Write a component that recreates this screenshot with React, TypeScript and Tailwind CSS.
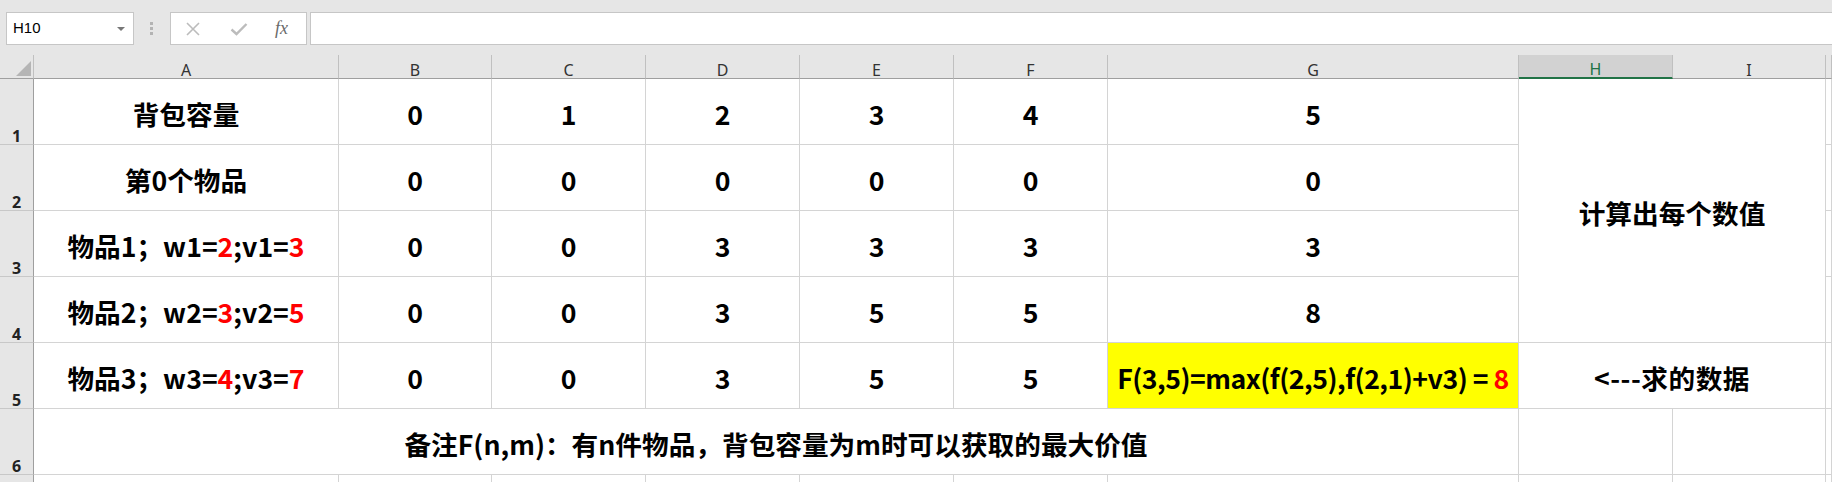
import type { ReactNode } from "react";

const colLetters = ["A", "B", "C", "D", "E", "F", "G", "H", "I", ""];

function Red({ children }: { children: ReactNode }) {
  return <span className="text-[#ff0000]">{children}</span>;
}

function Item({ n, w, v }: { n: number; w: number; v: number }) {
  return (
    <>
      物品{n}；w{n}=<Red>{w}</Red>;v{n}=<Red>{v}</Red>
    </>
  );
}

const cell =
  "flex items-center justify-center border-r border-b border-[#d4d4d4] pt-[5px] whitespace-nowrap";

function RowHead({ n }: { n?: number }) {
  return (
    <div className="flex items-end justify-center border-r border-b border-r-[#9f9f9f] border-b-[#c8c8c8] bg-[#e6e6e6] font-['Noto_Sans',sans-serif] text-[16px] leading-[16px] text-[#222]">
      {n}
    </div>
  );
}

function NumberCells({ values }: { values: string[] }) {
  return (
    <>
      {values.map((v, i) => (
        <div key={i} className={cell}>
          {v}
        </div>
      ))}
    </>
  );
}

export default function App() {
  return (
    <div className="h-[482px] w-[1832px] overflow-hidden bg-white">
      {/* formula bar */}
      <div className="flex h-[55px] items-start bg-[#e6e6e6] pt-[12px]">
        <div className="ml-[6px] flex h-[33px] w-[128px] items-center justify-between border border-[#c6c6c6] bg-white pl-[6px] pr-[8px] font-['Liberation_Sans',sans-serif] text-[15px] text-black">
          <span>H10</span>
          <svg width="8" height="4" viewBox="0 0 8 4">
            <polygon points="0,0 8,0 4,4" fill="#777" />
          </svg>
        </div>
        <div className="ml-[16px] flex h-[33px] flex-col items-center justify-center gap-[2px]">
          <div className="h-[3px] w-[3px] bg-[#b3b3b3]" />
          <div className="h-[3px] w-[3px] bg-[#b3b3b3]" />
          <div className="h-[3px] w-[3px] bg-[#b3b3b3]" />
        </div>
        <div className="ml-[17px] flex h-[33px] w-[137px] items-center border border-[#c6c6c6] bg-white pl-[14px]">
          <svg width="16" height="14" viewBox="0 0 16 14">
            <path d="M2 1 L14 13 M14 1 L2 13" stroke="#bcbcbc" strokeWidth="1.6" fill="none" />
          </svg>
          <svg className="ml-[29px]" width="18" height="14" viewBox="0 0 18 14">
            <path d="M1.5 7.5 L6.5 12 L16.5 2" stroke="#bcbcbc" strokeWidth="2.4" fill="none" />
          </svg>
          <span className="ml-[27px] font-['Liberation_Serif',serif] text-[18px] italic text-[#6a6a6a]">
            fx
          </span>
        </div>
        <div className="ml-[3px] h-[33px] flex-1 border border-r-0 border-[#c6c6c6] bg-white" />
      </div>

      {/* sheet */}
      <div className="grid grid-cols-[34px_305px_153px_154px_154px_154px_154px_411px_154px_153px_1fr] grid-rows-[24px_repeat(6,66px)_40px] font-['Noto_Sans_CJK_SC',sans-serif] text-[26.67px] font-bold text-black">
        {/* column headers */}
        <div className="flex items-end justify-end border-r border-b border-r-[#c0c0c0] border-b-[#9f9f9f] bg-[#e6e6e6] pb-[2px] pr-[2px]">
          <svg width="15" height="15" viewBox="0 0 15 15">
            <polygon points="15,0 15,15 0,15" fill="#b5b5b5" />
          </svg>
        </div>
        {colLetters.map((c, i) =>
          c === "H" ? (
            <div
              key={i}
              className="flex items-end justify-center border-r border-b-2 border-r-[#c0c0c0] border-b-[#217346] bg-[#d2d2d2] font-['Noto_Sans',sans-serif] text-[16px] font-normal leading-[16px] text-[#217346]"
            >
              {c}
            </div>
          ) : (
            <div
              key={i}
              className="flex items-end justify-center border-r border-b border-r-[#c0c0c0] border-b-[#9f9f9f] bg-[#e6e6e6] font-['Noto_Sans',sans-serif] text-[16px] font-normal leading-[16px] text-[#333]"
            >
              {c}
            </div>
          ),
        )}

        {/* row 1 */}
        <RowHead n={1} />
        <div className={cell}>背包容量</div>
        <NumberCells values={["0", "1", "2", "3", "4", "5"]} />
        <div className={`${cell} col-span-2 row-span-4`}>计算出每个数值</div>
        <div className={cell} />

        {/* row 2 */}
        <RowHead n={2} />
        <div className={cell}>第0个物品</div>
        <NumberCells values={["0", "0", "0", "0", "0", "0"]} />
        <div className={cell} />

        {/* row 3 */}
        <RowHead n={3} />
        <div className={cell}>
          <Item n={1} w={2} v={3} />
        </div>
        <NumberCells values={["0", "0", "3", "3", "3", "3"]} />
        <div className={cell} />

        {/* row 4 */}
        <RowHead n={4} />
        <div className={cell}>
          <Item n={2} w={3} v={5} />
        </div>
        <NumberCells values={["0", "0", "3", "5", "5", "8"]} />
        <div className={cell} />

        {/* row 5 */}
        <RowHead n={5} />
        <div className={cell}>
          <Item n={3} w={4} v={7} />
        </div>
        <NumberCells values={["0", "0", "3", "5", "5"]} />
        <div className="flex items-center justify-center whitespace-pre border-r border-b border-[#d4d4d4] bg-[#ffff00] pt-[5px] tracking-[-0.5px]">
          F(3,5)=max(f(2,5),f(2,1)+v3) = <Red>8</Red>
        </div>
        <div className={`${cell} col-span-2 tracking-[0.5px]`}>&lt;---求的数据</div>
        <div className={cell} />

        {/* row 6 */}
        <RowHead n={6} />
        <div className={`${cell} col-span-7`}>
          备注F(n,m)：有n件物品，背包容量为m时可以获取的最大价值
        </div>
        <div className={cell} />
        <div className={cell} />
        <div className={cell} />

        {/* row 7, mostly below the window */}
        <RowHead />
        {Array.from({ length: 10 }).map((_, i) => (
          <div key={i} className={cell} />
        ))}
      </div>
    </div>
  );
}
